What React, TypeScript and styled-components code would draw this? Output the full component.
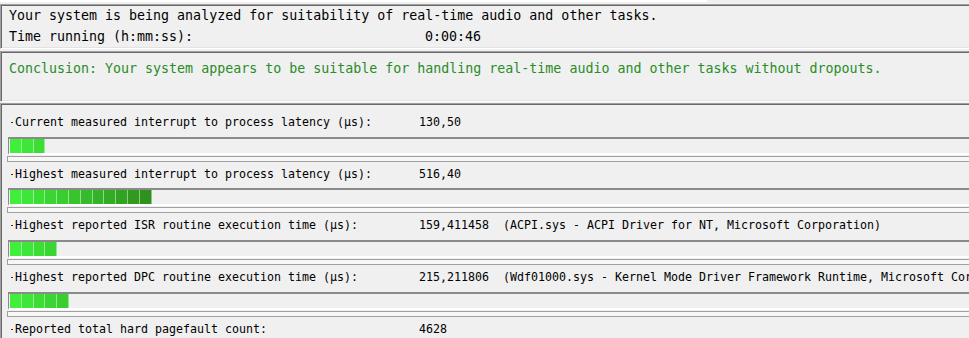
import React from 'react'
import styled, { createGlobalStyle } from 'styled-components'

const GlobalStyle = createGlobalStyle`
  html, body {
    margin: 0;
    padding: 0;
    background: #f0f0f0;
    overflow: hidden;
  }
  body {
    font-family: "DejaVu Sans Mono", "Liberation Mono", monospace;
    font-size: 13.3px;
    color: #000;
  }
`

const Screen = styled.div`
  width: 1200px;
  height: 338px;
  display: flex;
  flex-direction: column;
  overflow: hidden;
`

const TopEdge = styled.div`
  width: 707px;
  height: 2px;
  background: #fff;
  margin-bottom: 2px;
  flex-shrink: 0;
`

const Panel = styled.div<{ $gap?: number }>`
  flex-shrink: 0;
  margin-top: ${p => p.$gap ?? 0}px;
  border-style: solid;
  border-width: 1px 0 1px 1px;
  border-color: #a0a0a0 #fff #fff #a0a0a0;
  box-shadow: inset 1px 1px 0 #696969, inset 0 -1px 0 #e3e3e3;
`

const InfoPanel = styled(Panel)`
  height: 41px;
  padding: 1px 0 1px 8px;
`

const ConclusionPanel = styled(Panel)`
  height: 41px;
  padding: 7px 0 1px 8px;
  color: #288c28;
`

const ResultsPanel = styled(Panel)`
  flex: 1;
  border-bottom: none;
  padding: 6px 0 0 7px;
  font-size: 11.63px;
`

const Line = styled.div`
  display: flex;
  height: 20.5px;
  line-height: 20.5px;
  white-space: pre;
`

const InfoLabel = styled.span`
  width: 416px;
`

const Item = styled.div`
  display: flex;
  flex-direction: column;
`

const LabelRow = styled.div`
  display: flex;
  align-items: flex-start;
  height: 26.667px;
  line-height: 24px;
  white-space: pre;
  padding-left: 3px;
`

const Bullet = styled.span`
  width: 2px;
  height: 1px;
  background: #333;
  margin: 12px 2px 0 0;
  flex-shrink: 0;
`

const ItemLabel = styled.span`
  width: 404px;
  flex-shrink: 0;
`

const Value = styled.span`
  flex-shrink: 0;
`

const Meter = styled.div`
  height: 14px;
  display: flex;
  border-style: solid;
  border-width: 2px 0 2px 1px;
  border-color: #8a8a8a #fff #fff #8a8a8a;
  padding-left: 1px;
`

const Segment = styled.div<{ $t: number }>`
  width: 10.8px;
  height: 14px;
  border-right: 1px solid rgba(255, 255, 255, 0.45);
  background: ${p => {
    const mix = (a: number, b: number) => Math.round(a + (b - a) * p.$t)
    return `rgb(${mix(64, 46)}, ${mix(238, 146)}, ${mix(60, 28)})`
  }};
`

const Divider = styled.div`
  height: 4px;
  margin: 1px 0 0 -1px;
  border: 1px solid #a0a0a0;
  border-right: none;
  background: #f7f7f7;
`

type Row = {
  label: string
  value: string
  driver?: string
  blocks: number
}

const rows: Row[] = [
  { label: 'Current measured interrupt to process latency (µs):', value: '130,50', blocks: 3 },
  { label: 'Highest measured interrupt to process latency (µs):', value: '516,40', blocks: 12 },
  {
    label: 'Highest reported ISR routine execution time (µs):',
    value: '159,411458',
    driver: '(ACPI.sys - ACPI Driver for NT, Microsoft Corporation)',
    blocks: 4,
  },
  {
    label: 'Highest reported DPC routine execution time (µs):',
    value: '215,211806',
    driver: '(Wdf01000.sys - Kernel Mode Driver Framework Runtime, Microsoft Corporation)',
    blocks: 5,
  },
  { label: 'Reported total hard pagefault count:', value: '4628', blocks: 0 },
]

const App: React.FC = () => {
  return (
    <Screen>
      <GlobalStyle />
      <TopEdge />
      <InfoPanel>
        <Line>Your system is being analyzed for suitability of real-time audio and other tasks.</Line>
        <Line>
          <InfoLabel>Time running (h:mm:ss):</InfoLabel>
          <span>0:00:46</span>
        </Line>
      </InfoPanel>
      <ConclusionPanel $gap={2}>
        <Line>Conclusion: Your system appears to be suitable for handling real-time audio and other tasks without dropouts.</Line>
      </ConclusionPanel>
      <ResultsPanel $gap={1}>
        {rows.map((row, index) => (
          <Item key={index}>
            <LabelRow>
              <Bullet />
              <ItemLabel>{row.label}</ItemLabel>
              <Value>{row.driver ? `${row.value}  ${row.driver}` : row.value}</Value>
            </LabelRow>
            <Meter>
              {Array.from({ length: row.blocks }).map((_, i) => (
                <Segment key={i} $t={i / 11} />
              ))}
            </Meter>
            <Divider />
          </Item>
        ))}
      </ResultsPanel>
    </Screen>
  )
}

export default App
